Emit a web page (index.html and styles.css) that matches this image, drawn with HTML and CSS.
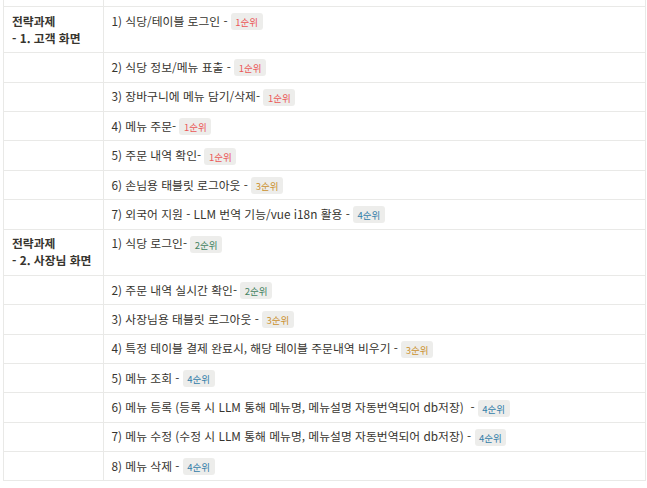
FILE: index.html
```html
<!DOCTYPE html>
<html lang="ko">
<head>
<meta charset="utf-8">
<link rel="stylesheet" href="styles.css">
</head>
<body>
<table class="grid">
  <tr class="cut"><td class="key"></td><td></td></tr>
  <tr><td class="key">전략과제<br>- 1. 고객 화면</td><td>1) 식당/테이블 로그인 - <code class="p1">1순위</code></td></tr>
  <tr><td class="key"></td><td>2) 식당 정보/메뉴 표출 - <code class="p1">1순위</code></td></tr>
  <tr><td class="key"></td><td>3) 장바구니에 메뉴 담기/삭제- <code class="p1">1순위</code></td></tr>
  <tr><td class="key"></td><td>4) 메뉴 주문- <code class="p1">1순위</code></td></tr>
  <tr><td class="key"></td><td>5) 주문 내역 확인- <code class="p1">1순위</code></td></tr>
  <tr><td class="key"></td><td>6) 손님용 태블릿 로그아웃 - <code class="p3">3순위</code></td></tr>
  <tr><td class="key"></td><td>7) 외국어 지원 - LLM 번역 기능/vue i18n 활용 - <code class="p4">4순위</code></td></tr>
  <tr><td class="key">전략과제<br>- 2. 사장님 화면</td><td>1) 식당 로그인- <code class="p2">2순위</code></td></tr>
  <tr><td class="key"></td><td>2) 주문 내역 실시간 확인- <code class="p2">2순위</code></td></tr>
  <tr><td class="key"></td><td>3) 사장님용 태블릿 로그아웃 - <code class="p3">3순위</code></td></tr>
  <tr><td class="key"></td><td>4) 특정 테이블 결제 완료시, 해당 테이블 주문내역 비우기 - <code class="p3">3순위</code></td></tr>
  <tr><td class="key"></td><td>5) 메뉴 조회 - <code class="p4">4순위</code></td></tr>
  <tr><td class="key"></td><td>6) 메뉴 등록 (등록 시 LLM 통해 메뉴명, 메뉴설명 자동번역되어 db저장)&nbsp; - <code class="p4">4순위</code></td></tr>
  <tr><td class="key"></td><td>7) 메뉴 수정 (수정 시 LLM 통해 메뉴명, 메뉴설명 자동번역되어 db저장) - <code class="p4">4순위</code></td></tr>
  <tr><td class="key"></td><td>8) 메뉴 삭제 - <code class="p4">4순위</code></td></tr>
</table>
</body>
</html>
```
FILE: styles.css
```css
html, body {
  margin: 0;
  padding: 0;
  background: #ffffff;
}
body {
  padding-left: 3px;
  font-family: "Noto Sans CJK KR", "Noto Sans", sans-serif;
  font-size: 11.8px;
  color: #37352f;
}
.grid {
  border-collapse: collapse;
  width: 643px;
  table-layout: fixed;
}
.grid td {
  border: 1px solid #e9e9e7;
  padding: 5.8px 8px 5.8px 7.5px;
  line-height: 16.8px;
  vertical-align: top;
  white-space: nowrap;
}
.grid td.key {
  width: 100px;
  box-sizing: border-box;
  padding-left: 8px;
  font-weight: 700;
}
.grid tr.cut td {
  border-top: none;
  padding: 0;
  height: 6px;
  line-height: 6px;
}
code {
  font-family: "Noto Sans CJK KR", sans-serif;
  font-size: 9.5px;
  line-height: 1;
  padding: 1.5px 4.5px;
  border-radius: 3px;
  background: rgba(135, 131, 120, 0.15);
}
.p1 { color: #eb5757; }
.p2 { color: #448361; }
.p3 { color: #cb912f; }
.p4 { color: #337ea9; }
```
